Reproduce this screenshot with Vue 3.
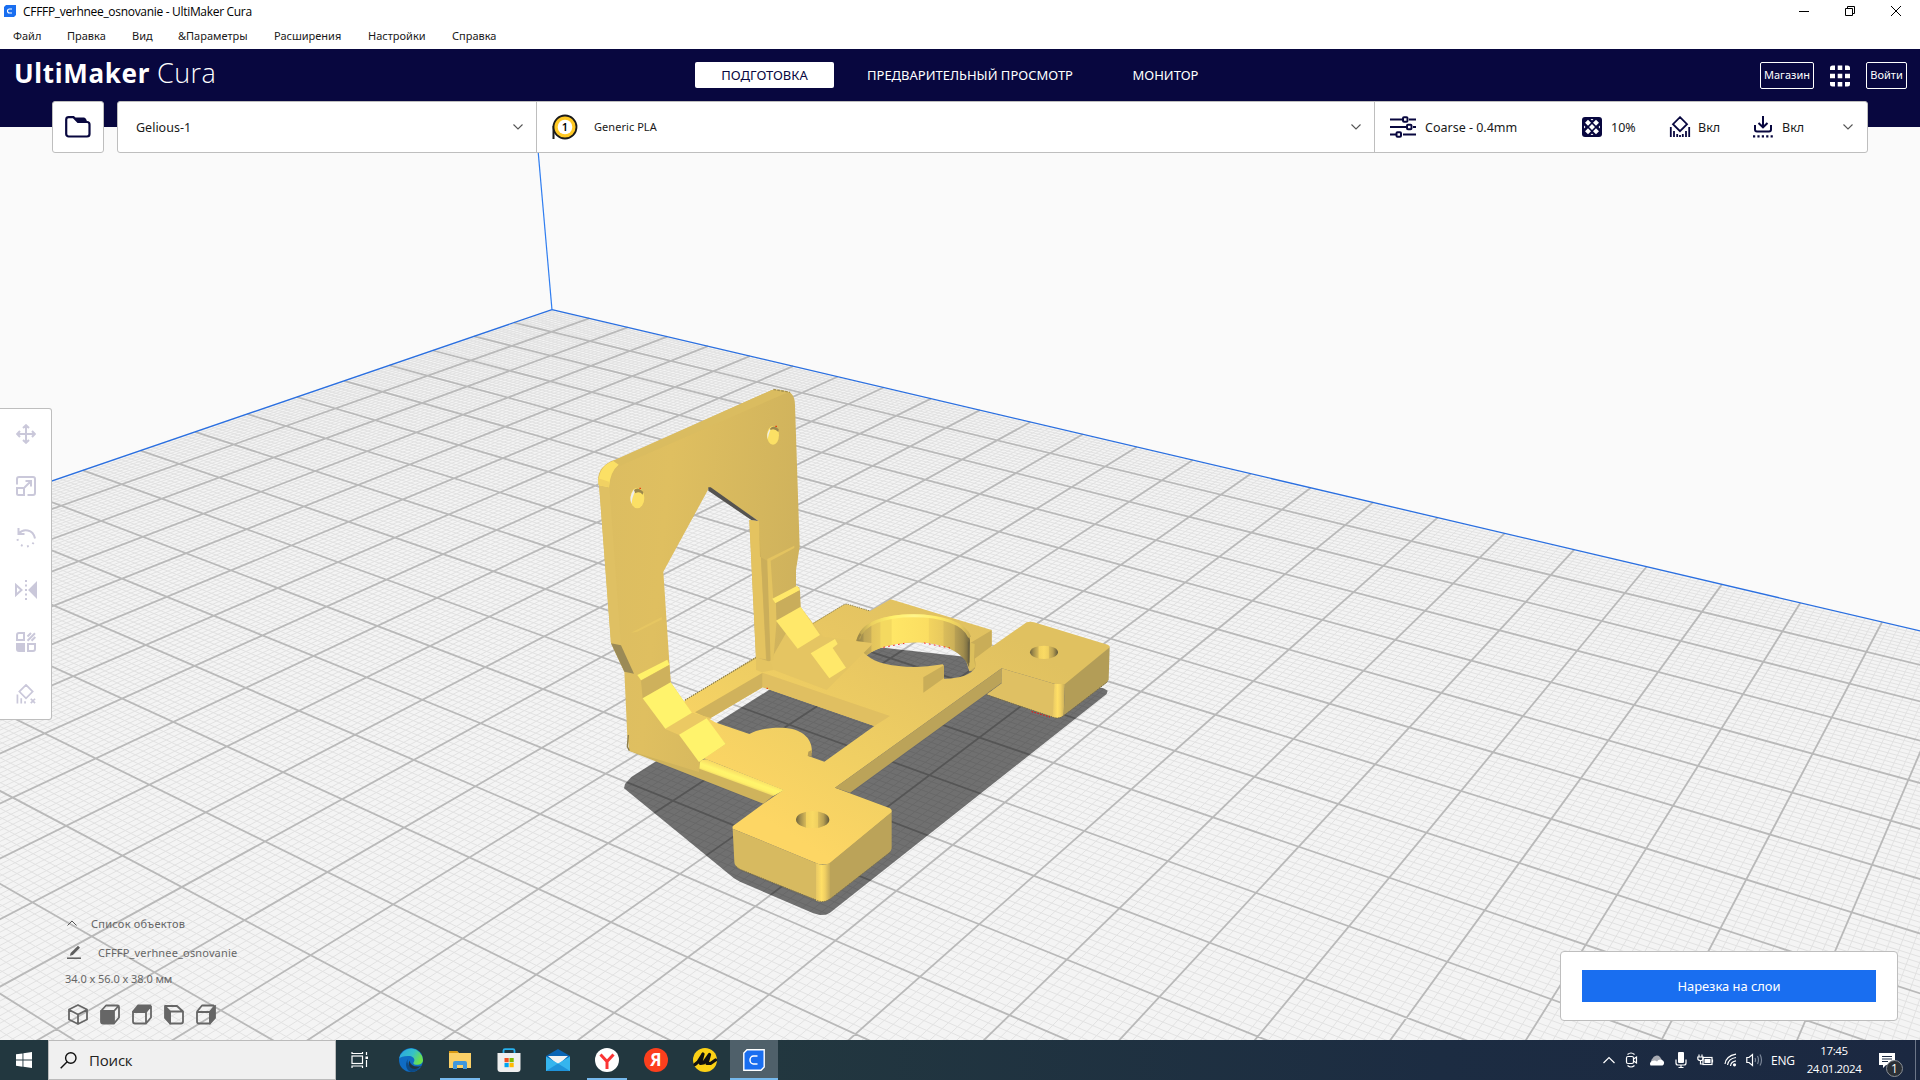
<script setup>
const menu = [
  { label: 'Файл', w: 54 },
  { label: 'Правка', w: 65 },
  { label: 'Вид', w: 46 },
  { label: '&Параметры', w: 96 },
  { label: 'Расширения', w: 94 },
  { label: 'Настройки', w: 84 },
  { label: 'Справка', w: 60 },
]

// Perspective projection of build plate coordinates (in centimetres) to the viewport
const project = (i, j) => {
  const d = 1 - 0.013994 * i - 0.020446 * j
  return [
    ((552 + 29.082 * i - 48.598 * j) / d).toFixed(1),
    ((309.6 + 4.312 * i + 6.455 * j) / d).toFixed(1),
  ]
}
const seg = (a, b) => `M${project(...a).join(' ')}L${project(...b).join(' ')}`
const MAX_I = 28
const MAX_J = 21
let minor = ''
let major = ''
for (let k = 1; k <= MAX_I * 10; k++) {
  const s = seg([k / 10, 0], [k / 10, MAX_J])
  if (k % 10) minor += s
  else major += s
}
for (let k = 1; k <= MAX_J * 10; k++) {
  const s = seg([0, k / 10], [MAX_I, k / 10])
  if (k % 10) minor += s
  else major += s
}
const plate = [[0, 0], [MAX_I, 0], [MAX_I, MAX_J], [0, MAX_J]].map((p) => project(...p).join(',')).join(' ')
const edges = seg([0, MAX_J], [0, 0]) + seg([0, 0], [MAX_I, 0])
</script>

<template>
  <div class="screen">
    <div class="titlebar">
      <svg class="app-icon" width="12" height="12" viewBox="0 0 12 12"><path d="M2 0H12V10L10 12H0V2Z" fill="#196ef0" /><path d="M8 4H5.5a2 2 0 0 0 0 4H8" fill="none" stroke="#fff" stroke-width="1.1" /></svg>
      <span class="title">CFFFP_verhnee_osnovanie - UltiMaker Cura</span>
      <div class="winbtns">
        <svg width="12" height="12" viewBox="0 0 12 12"><path d="M1 6.5H11" /></svg>
        <svg width="12" height="12" viewBox="0 0 12 12"><path d="M1.5 3.5H8.5V10.5H1.5ZM3.5 3.5V1.5H10.5V8.5H8.5" /></svg>
        <svg width="12" height="12" viewBox="0 0 12 12"><path d="M1 1L11 11M11 1L1 11" /></svg>
      </div>
    </div>
    <nav class="menubar">
      <span v-for="m in menu" :key="m.label" :style="{ width: m.w + 'px' }">{{ m.label }}</span>
    </nav>

    <header class="header">
      <div class="brand"><b>UltiMaker</b><span>Cura</span></div>
      <div class="tabs">
        <span class="tab active">ПОДГОТОВКА</span>
        <span class="tab preview">ПРЕДВАРИТЕЛЬНЫЙ ПРОСМОТР</span>
        <span class="tab monitor">МОНИТОР</span>
      </div>
      <div class="account">
        <span class="obtn shop">Магазин</span>
        <svg width="20" height="22" viewBox="0 0 20 22" fill="#fff">
          <path d="M0 5V3a2.500 2.500 0 0 1 2.500-2.500H5V5ZM7.700 .5h4.600V5H7.700ZM15 .5h2.500A2.500 2.500 0 0 1 20 3V5H15ZM0 8.700H5v4.600H0ZM7.700 8.700h4.600v4.600H7.700ZM15 8.700h5v4.600H15ZM0 17H5v4.500H2.500A2.500 2.500 0 0 1 0 19ZM7.700 17h4.600v4.500H7.700ZM15 17h5v2a2.500 2.500 0 0 1-2.500 2.500H15Z" />
        </svg>
        <span class="obtn login">Войти</span>
      </div>
    </header>

    <main class="stage">
      <svg class="scene" width="1920" height="913" viewBox="0 127 1920 913">
        <defs>
          <linearGradient id="top" gradientUnits="userSpaceOnUse" x1="700" y1="120" x2="250" y2="850"><stop offset="0" stop-color="#e0c160" /><stop offset=".3" stop-color="#e7c662" /><stop offset=".65" stop-color="#f0cf63" /><stop offset="1" stop-color="#fdd664" /></linearGradient>
          <linearGradient id="face" gradientUnits="userSpaceOnUse" x1="130" y1="500" x2="720" y2="560"><stop offset="0" stop-color="#dcbd61" /><stop offset=".3" stop-color="#dfbf60" /><stop offset="1" stop-color="#cfb25c" /></linearGradient>
          <linearGradient id="ring"><stop offset="0" stop-color="#8f7f48" /><stop offset=".05" stop-color="#a8934f" /><stop offset=".06" stop-color="#bfa656" /><stop offset=".12" stop-color="#c9ae58" /><stop offset=".13" stop-color="#e3c45c" /><stop offset=".2" stop-color="#e8ca5e" /><stop offset=".21" stop-color="#f4d960" /><stop offset=".3" stop-color="#f4d960" /><stop offset=".31" stop-color="#ffe666" /><stop offset=".63" stop-color="#fbde62" /><stop offset=".64" stop-color="#f2d35f" /><stop offset=".76" stop-color="#e8c95e" /><stop offset=".77" stop-color="#d9bc5b" /><stop offset=".86" stop-color="#ccb058" /><stop offset=".87" stop-color="#b8a054" /><stop offset=".94" stop-color="#a08c4d" /><stop offset="1" stop-color="#6f6540" /></linearGradient>
          <linearGradient id="rim" gradientUnits="userSpaceOnUse" x1="414" y1="0" x2="752" y2="0"><stop offset="0" stop-color="#b09a50" /><stop offset=".12" stop-color="#ecd05f" /><stop offset=".3" stop-color="#fff06a" /><stop offset=".5" stop-color="#fff58c" /><stop offset=".7" stop-color="#ffec67" /><stop offset=".9" stop-color="#e9cb5e" /><stop offset="1" stop-color="#c6ac56" /></linearGradient>
          <linearGradient id="bore"><stop offset="0" stop-color="#6f643e" /><stop offset=".12" stop-color="#a08c4c" /><stop offset=".3" stop-color="#d8ba59" /><stop offset=".31" stop-color="#f2d25f" /><stop offset=".5" stop-color="#fada64" /><stop offset=".66" stop-color="#efcf60" /><stop offset=".67" stop-color="#d9bb5a" /><stop offset=".82" stop-color="#b9a052" /><stop offset="1" stop-color="#5f573b" /></linearGradient>
          <linearGradient id="corner"><stop offset="0" stop-color="#e8c864" /><stop offset=".4" stop-color="#ffdf66" /><stop offset=".65" stop-color="#f0cf62" /><stop offset="1" stop-color="#c4aa5a" /></linearGradient>
          <linearGradient id="fillet" gradientUnits="userSpaceOnUse" x1="80" y1="643" x2="66" y2="682"><stop offset="0" stop-color="#f8da64" /><stop offset=".4" stop-color="#fff56c" /><stop offset=".65" stop-color="#fff069" /><stop offset="1" stop-color="#dfc05f" /></linearGradient>
        </defs>

        <rect y="127" width="1920" height="913" fill="#fafafa" />
        <polygon :points="plate" fill="#f4f4f4" />
        <path :d="minor" stroke="#e2e2e2" stroke-width="1" />
        <path :d="major" stroke="#b9b9b9" stroke-width="1.8" />
        <path :d="edges" stroke="#2a6fe0" stroke-width="1.300" fill="none" />
        <path d="M536 127L552 310" stroke="#2f7df0" stroke-width="1.200" />

        <g transform="translate(720 560) scale(.33333)">
          <polygon points="-288,685 -285,672 -265,650 150,388 340,262 490,263 735,290 1150,385 1163,392 1160,402 330,1058 318,1064 300,1065 280,1060 60,965 42,955" fill="#000" fill-opacity=".54" />

          <!-- base plate with the window and the round opening cut out -->
          <path fill="url(#top)" fill-rule="evenodd" d="M-105 421L110 290L370 135Q380 130 390 135L450 153L512 118L815 210L815 260L920 187Q930 184 942 187L1163 254Q1172 258 1168 264L1040 372L1005 372L845 325L345 683L510 745Q518 750 514 758L328 912L295 912L38 806Q36 798 42 796L130 731L190 690L-60 590L-150 500Z
            M128 382L463 498L313 605L265 588L275 578C280 540 250 503 180 503C140 503 110 510 88 522L-15 487L-32 476Z
            M440 286C470 262 530 247 600 247C660 250 710 270 735 292L748 334L766 322C755 345 715 357 672 356L672 318L668 313C580 328 480 322 440 286Z" />
          <path d="M128 338V382L-32 476L-75 457Z" fill="#d0b25c" />
          <path d="M128 338L510 468L463 498L128 382Z" fill="#e0bf61" />
          <path d="M265 575L275 570V590L263 588Z" fill="#b59c55" />
          <path d="M-105 421L110 290M280 190L370 135Q380 130 390 135L450 153" fill="none" stroke="#8f7f48" stroke-width="3" stroke-dasharray="4 3" />

          <!-- round opening -->
          <path d="M412 245C415 190 490 163 580 163C670 163 745 195 750 240L748 325C735 280 670 246 590 247C520 248 470 264 440 286Q410 265 412 245Z" fill="url(#ring)" />
          <path d="M416 238C425 190 495 167 580 167C665 167 735 190 749 232" fill="none" stroke="url(#rim)" stroke-width="9" />
          <path d="M412 262Q408 238 422 222" fill="none" stroke="#9d8949" stroke-width="6" />
          <path d="M752 248L815 211V258L764 296Q772 322 758 332L748 334Z" fill="#c9ad58" />
          <path d="M752 248L764 252L762 296L766 320L748 334Z" fill="#dcbf5c" />
          <path d="M746 245V308" stroke="#6b6240" stroke-width="5" />
          <path d="M610 352L672 316V354L610 398Z" fill="#c9ad58" />
          <path d="M490 262L553 250M612 249L690 264" stroke="#f00" stroke-width="2.500" stroke-dasharray="5 10" />

          <!-- beam and right block -->
          <path d="M345 683L845 325V368L390 698Z" fill="#bba359" />
          <path d="M845 325L1005 372L1000 472L800 403L845 370Z" fill="#dfc063" />
          <path d="M1003 372H1035L1031 466Q1015 480 998 470Z" fill="url(#corner)" />
          <path d="M1035 372L1169 262L1166 358L1160 368L1031 466Z" fill="#b39d57" />
          <path d="M800 405L1000 472Q1015 478 1031 468L1164 364" fill="none" stroke="#756a45" stroke-width="3" stroke-dasharray="4 3" />
          <path d="M935 455L990 471" stroke="#f00" stroke-width="3" stroke-dasharray="4 5" />
          <ellipse cx="972" cy="277" rx="42" ry="20" fill="url(#bore)" />

          <!-- front block -->
          <path d="M38 806L295 912L290 1020L60 928Q43 918 43 905Z" fill="#d7ba60" />
          <path d="M288 910Q310 918 330 908V1016Q312 1030 288 1022Z" fill="url(#corner)" />
          <path d="M330 908L515 756V865Q514 875 505 880L330 1017Z" fill="#bba359" />
          <path d="M47 918L60 928L290 1021Q312 1030 330 1017L512 876" fill="none" stroke="#7d7147" stroke-width="3" stroke-dasharray="4 3" />
          <ellipse cx="278" cy="779" rx="50" ry="26" fill="url(#bore)" />

          <!-- long front edge -->
          <path d="M-272 570L-60 600L190 690L160 707L130 731L-272 573Z" fill="#cfb35c" />
        </g>

        <g transform="translate(560 370) scale(.33333)">
          <!-- upright bracket -->
          <path fill="url(#face)" d="M115 320Q120 285 165 270L636 60Q650 55 690 67Q705 80 705 105L719 530L708 600V650L718 652L721 712L779 795L713 835L840 860L632 878L588 864L568 450L595 453L447 354L310 605L332 937L395 1028L430 1040L497 1122L417 1175V1206L208 1142L202 1100L193 905L153 820Z" />
          <path d="M632 870L722 712L790 800L940 820L800 960L588 880Z" fill="#e5c562" />
          <path d="M115 320L118 350L153 820L183 826L148 348Z" fill="#dfc063" />
          <path d="M165 270L636 60L690 67L672 72L180 287Q155 300 148 348L116 345Q112 285 165 270Z" fill="#dabc60" />
          <path d="M116 345Q112 290 160 273L176 284Q150 305 147 352L117 346Z" fill="#fbe065" />
          <path d="M115 325L117 346L147 352V335Z" fill="#f1d163" />
          <path d="M640 58L690 67" stroke="#a59150" stroke-width="4" stroke-dasharray="8 4" />
          <path d="M153 820L183 826L222 911L193 905Z" fill="#9b8a56" />
          <path d="M445 352L452 352L595 453L575 451L445 362Z" fill="#555350" />
          <path d="M568 450L597 454L618 868L588 864Z" fill="#e4c360" />
          <path d="M597 454L600 560L622 573L632 872L620 876Z" fill="#cbae5a" />
          <path d="M588 862L632 876L640 900L606 907L588 900Z" fill="#e4c461" />

          <path d="M622 573V567L703 527V534L632 572L640 690L648 702L650 752L640 870L632 872Z" fill="#e3c360" />
          <path d="M637 686L712 647L720 660L646 700Z" fill="#ffe869" />
          <path d="M648 700L720 661L722 711L650 750Z" fill="#c9ad5b" />
          <path d="M648 752L722 710L780 795L713 836Z" fill="#ffe86a" />
          <path d="M752 850L825 807L833 822L818 834L858 893L808 925Z" fill="#ffe86a" />

          <path d="M213 788L305 741L307 748L232 785Z" fill="#e6c662" />
          <path d="M232 915L322 869L328 884L243 931Z" fill="#fff269" />
          <path d="M243 932L328 885L332 937L248 985Z" fill="#ceb15c" />
          <path d="M314 1076L395 1028L455 1045L357 1095Z" fill="#ebc963" />
          <path d="M248 985L332 937L396 1028L316 1076Z" fill="#fff36c" />
          <path d="M357 1094L440 1045L497 1122L417 1176Z" fill="#fff36c" />
          <path d="M205 1095L202 1130L208 1142" fill="none" stroke="#8e7e4a" stroke-width="4" />
          <path d="M375 990L588 864" stroke="#8f7f48" stroke-width="3" stroke-dasharray="4 3" />

          <ellipse cx="232" cy="384" rx="21" ry="31" fill="#fbe065" />
          <path d="M222 358Q206 380 214 402Q216 384 226 360Z" fill="#eee" />
          <path d="M222 360Q234 348 250 366L248 374Q238 362 226 370Z" fill="#9c884c" />
          <path d="M238 355H243" stroke="#e20" stroke-width="3" />
          <ellipse cx="639" cy="196" rx="18" ry="28" fill="#fbe065" />
          <path d="M629 178Q619 190 623 208Q626 190 632 178Z" fill="#eee" />
          <path d="M630 176Q642 162 656 178L655 186Q643 174 632 180Z" fill="#9c884c" />
          <path d="M646 169H651M620 955H624" stroke="#e20" stroke-width="3" />
        </g>

        <path transform="translate(720 560) scale(.33333)" d="M-62 626L-60 606Q-55 596 -40 598L192 690L160 708Z" fill="url(#fillet)" />
      </svg>

      <div class="config">
        <div class="card open">
          <svg width="26" height="22" viewBox="0 0 26 22"><path d="M1.200 3.500A2.500 2.500 0 0 1 3.700 1.200H8.500L13 6H22A2.500 2.500 0 0 1 24.500 8.500V18A2.500 2.500 0 0 1 22 20.500H3.700A2.500 2.500 0 0 1 1.200 18Z" fill="none" stroke="#08073f" stroke-width="2.200" /><path d="M10 1.500H19Q21.500 2 22 6H13.500Z" fill="#08073f" /></svg>
        </div>
        <div class="card bar">
          <div class="cell machine">
            <span>Gelious-1</span>
            <svg class="chev" width="10" height="6" viewBox="0 0 10 6"><path d="M.5 .5L5 5L9.500 .5" /></svg>
          </div>
          <div class="cell material">
            <svg width="28" height="28" viewBox="0 0 28 28"><path d="M2.500 13V26" stroke="#1b1b1b" stroke-width="2" /><circle cx="14" cy="14" r="11.500" fill="#ffc924" stroke="#1b1b1b" stroke-width="1.800" /><circle cx="14" cy="14" r="7.300" fill="#fff" /><text x="14" y="18" text-anchor="middle" font-size="11" font-weight="600">1</text></svg>
            <span class="pla">Generic PLA</span>
            <svg class="chev" width="10" height="6" viewBox="0 0 10 6"><path d="M.5 .5L5 5L9.500 .5" /></svg>
          </div>
          <div class="cell print">
            <svg width="26" height="22" viewBox="0 0 26 22" fill="none" stroke="#08073f" stroke-width="2"><path d="M0 3.500H12M19 3.500H26M0 11H16M23 11H26M0 18.500H6M13 18.500H26" /><rect x="13" y="1.300" width="4.500" height="4.500" rx="1" /><rect x="17" y="8.700" width="4.500" height="4.500" rx="1" /><rect x="6.500" y="16.200" width="4.500" height="4.500" rx="1" /></svg>
            <span class="profile">Coarse - 0.4mm</span>
            <svg class="infill" width="20" height="20" viewBox="0 0 20 20"><rect width="20" height="20" rx="3" fill="#08073f" /><path d="M6 2.800L9 5.800L6 8.800L3 5.800ZM14 2.800L17 5.800L14 8.800L11 5.800ZM6 11.200L9 14.200L6 17.200L3 14.200ZM14 11.200L17 14.200L14 17.200L11 14.200ZM10 7L13 10L10 13L7 10ZM2 8.500L3.500 10L2 11.500ZM18 8.500L16.500 10L18 11.500ZM8.500 2H11.500L10 3.500ZM8.500 18H11.500L10 16.500Z" fill="#fff" /></svg>
            <span class="pct">10%</span>
            <svg class="supp" width="22" height="22" viewBox="0 0 22 22" fill="none" stroke="#08073f" stroke-width="1.800"><path d="M11 1.200L18 8.200L11 15.200L4 8.200ZM1.800 11V21M5 15V21M8.200 18V21M11 19V21M13.800 18V21M17 15V21M20.200 11V21" /></svg>
            <span class="on1">Вкл</span>
            <svg class="adh" width="20" height="22" viewBox="0 0 20 22" fill="none" stroke="#08073f"><path d="M10 0V10M5.500 7L10 11.300L14.500 7" stroke-width="2" /><path d="M2 9V13.500Q2 15.500 4 15.500H16Q18 15.500 18 13.500V9" stroke-width="2" /><path d="M0 20.300H20" stroke-width="2.200" stroke-dasharray="2.200 2.200" /></svg>
            <span class="on2">Вкл</span>
            <svg class="chev" width="10" height="6" viewBox="0 0 10 6"><path d="M.5 .5L5 5L9.500 .5" /></svg>
          </div>
        </div>
      </div>

      <div class="tools">
        <svg viewBox="0 0 20 20"><path d="M10 1.500V18.500M1.500 10H18.500M7 4L10 1.200L13 4M7 16L10 18.800L13 16M4 7L1.200 10L4 13M16 7L18.800 10L16 13" /></svg>
        <svg viewBox="0 0 20 20"><path d="M1 8.500V3A2 2 0 0 1 3 1H17A2 2 0 0 1 19 3V17A2 2 0 0 1 17 19H11.500M1 12H8V19H2.500A1.500 1.500 0 0 1 1 17.500ZM8.500 11.500L14.500 5.500M9.500 5H15V10.500" /></svg>
        <svg viewBox="0 0 20 20"><path d="M2.500 0V6H8.500M3 5.500C7 .5 17 1 19 10.500" /><path d="M1.500 11L2 13.500M5 17L7.500 18.300M11 18.500L14 17.800M16.500 16L18.500 13.500" stroke-dasharray="1.800 2" /></svg>
        <svg viewBox="0 0 22 20" class="wide"><path d="M1 5L6.500 10L1 15Z" /><path d="M21 3.500V16.500L14.500 10Z" fill="#cac8da" /><path d="M11 0V20" stroke-dasharray="2 2.500" /></svg>
        <svg viewBox="0 0 20 20"><path d="M1 3A2 2 0 0 1 3 1H8V8H1ZM12 12H19V17A2 2 0 0 1 17 19H12Z" /><path d="M1 12H8V19H3A2 2 0 0 1 1 17Z" fill="#cac8da" /><path d="M11.500 4.500L15 1M11.500 8.700L19 1.200M15.500 8.700L19.300 5" /></svg>
        <svg viewBox="0 0 20 21"><path d="M10 1L17 8L10 15L3 8ZM1 11V20.500M5 15V20.500M9 18V20.500M15 15.500L19.500 20M19.500 15.500L15 20" stroke-width="1.800" /></svg>
      </div>

      <div class="bottom">
        <div class="objects">
          <div class="orow">
            <svg width="10" height="6" viewBox="0 0 10 6"><path d="M.5 5.500L5 1L9.500 5.500" fill="none" stroke="#555" stroke-width="1" /></svg>
            <span class="olist">Список объектов</span>
          </div>
          <div class="orow second">
            <svg width="14" height="14" viewBox="0 0 14 14"><path d="M0 13.200H14" stroke="#5e5e5e" stroke-width="1.500" /><path d="M3 10.800L3.600 8L11 .8L13 2.700L5.800 10Z" fill="#5e5e5e" /></svg>
            <span class="ofile">CFFFP_verhnee_osnovanie</span>
          </div>
          <div class="dims">34.0 x 56.0 x 38.0 мм</div>
          <div class="views">
            <svg viewBox="0 0 20 21"><path d="M10 1L19 5.500V15.500L10 20L1 15.500V5.500ZM1.500 6L10 10.500L18.500 6M10 10.500V20" /></svg>
            <svg viewBox="0 0 20 21"><path d="M1 7L6 1.500H17.500Q19 1.500 19 3V13.500L14 19.500M14 7L18.500 2" /><path d="M1 7H14V19.500H3Q1 19.500 1 17.500Z" fill="#666" /></svg>
            <svg viewBox="0 0 20 21"><path d="M1 8H14V19.500H3Q1 19.500 1 17.500ZM19 2V13.500L14 19.500M14 8L19 2" /><path d="M1 7.500L6 1.500H18.500L14 7.500Z" fill="#666" /></svg>
            <svg viewBox="0 0 20 21"><path d="M6 7.500H19V17.500Q19 19.500 17 19.500H6ZM1 2H13L19 7.500" /><path d="M1 2L6 7.500V19.500L1 14Z" fill="#666" /></svg>
            <svg viewBox="0 0 20 21"><path d="M1 8H14V19.500H3Q1 19.500 1 17.500ZM1 7.500L6 1.500H18" /><path d="M14 7.500L19 1.800V14L14 19.500Z" fill="#666" /></svg>
          </div>
        </div>
        <div class="slice"><div class="slice-btn">Нарезка на слои</div></div>
      </div>
    </main>

    <footer class="taskbar">
      <div class="start"><svg width="16" height="16" viewBox="0 0 16 16" fill="#fff"><path d="M0 2.300L6.500 1.400V7.600H0ZM7.400 1.200L16 0V7.600H7.400ZM0 8.500H6.500V14.700L0 13.700ZM7.400 8.500H16V16L7.400 14.800Z" /></svg></div>
      <div class="search">
        <svg width="17" height="17" viewBox="0 0 17 17" fill="none" stroke="#111" stroke-width="1.400"><circle cx="10.800" cy="6" r="5.200" /><path d="M7.200 9.800L.7 16.300" /></svg>
        <span>Поиск</span>
      </div>
      <div class="apps">
        <div class="app tv"><svg width="18" height="18" viewBox="0 0 18 18" fill="none" stroke="#fff" stroke-width="1.200"><rect x="1" y="5" width="10.500" height="7.500" /><path d="M1 1V2.500H11.500V1M1 17V15H11.500V17M15.500 1V4M15.500 9V16" /><rect x="14.500" y="5.500" width="2.500" height="2.500" fill="#fff" stroke="none" /></svg></div>
        <div class="app">
          <svg width="24" height="24" viewBox="0 0 24 24"><defs><linearGradient id="eg" x1="0" y1="0" x2="1" y2=".4"><stop offset="0" stop-color="#2aa4e4" /><stop offset=".6" stop-color="#35c1c8" /><stop offset="1" stop-color="#6be04e" /></linearGradient></defs><circle cx="12" cy="12" r="12" fill="#0f6cc4" /><path d="M.2 10.500A12 12 0 0 1 24 12C24 16.500 19 17.500 15.500 16.500Q13.500 15.700 15 13.800C16.500 10.500 13.500 8 10 8C5 7.800 1.500 9 .2 10.500Z" fill="url(#eg)" /><path d="M8.500 13C8.500 18 13 21.500 20.500 20.200Q17 24 12 24C6 22 5.500 13.500 10.500 9.500Q8.500 11 8.500 13Z" fill="#0c4a86" /><path d="M10.500 12.500Q11.500 19 20 18.500Q22 18 22.500 17.500Q19 22 13 20.500Q8 17.500 10.500 12.500Z" fill="#22343f" /></svg>
        </div>
        <div class="app run"><svg width="22" height="20" viewBox="0 0 22 20"><path d="M0 1H8L10 3H22V18H0Z" fill="#fbd067" /><path d="M0 1H8L9.500 3H0Z" fill="#d99a14" /><path d="M4 19V13Q4 11 6 11H16Q18 11 18 13V19H14V15H8V19Z" fill="#3f97dc" /></svg></div>
        <div class="app"><svg width="24" height="24" viewBox="0 0 24 24"><path d="M6.500 6V2.500Q6.500 1.200 8 1.200H16Q17.500 1.200 17.500 2.500V6" fill="none" stroke="#27b1ee" stroke-width="1.800" /><path d="M.5 5H23.500V21Q23.500 24 20.500 24H3.500Q.5 24 .5 21Z" fill="#efefef" /><rect x="7.500" y="10" width="4.200" height="4.200" fill="#f25022" /><rect x="12.500" y="10" width="4.200" height="4.200" fill="#7fba00" /><rect x="7.500" y="15" width="4.200" height="4.200" fill="#00a4ef" /><rect x="12.500" y="15" width="4.200" height="4.200" fill="#ffb900" /></svg></div>
        <div class="app"><svg width="24" height="22" viewBox="0 0 24 22"><path d="M0 7L12 0L24 7V14H0Z" fill="#0a64b4" /><path d="M2 7H22L12 16Z" fill="#f2f2f2" /><path d="M0 7.500L12 14.500L24 7.500V22H0Z" fill="#35b5ee" /><path d="M0 22L12 14.500L24 22Z" fill="#1f93da" /></svg></div>
        <div class="app run"><svg width="24" height="24" viewBox="0 0 24 24"><circle cx="12" cy="12" r="12" fill="#fff" /><path d="M5.500 6.500L12 13.500L18.500 6.500M12 13V21" stroke="#fb3434" stroke-width="3" fill="none" /></svg></div>
        <div class="app"><span class="ya">Я</span></div>
        <div class="app"><svg width="24" height="24" viewBox="0 0 24 24"><circle cx="12" cy="12" r="12" fill="#fcd116" /><path d="M2 16.500L5 14L10 6L7.500 15.500L10.500 15L16.500 6.500L14 15.500L17.500 15.500L22.500 12" stroke="#111" stroke-width="3.200" stroke-linejoin="round" stroke-linecap="round" fill="none" /></svg></div>
        <div class="app run cura"><svg width="22" height="22" viewBox="0 0 22 22"><path d="M4 .8H21.200V18L18 21.200H.8V4Z" fill="#196ef0" stroke="#fff" stroke-width="1.400" /><path d="M14.500 7H10.500A3.500 4 0 0 0 10.500 15H14.500" fill="none" stroke="#fff" stroke-width="1.500" /></svg></div>
      </div>
      <div class="tray">
        <svg width="12" height="8" viewBox="0 0 12 8"><path d="M.5 7L6 1.500L11.500 7" /></svg>
        <svg width="14" height="16" viewBox="0 0 14 16"><rect x="1.500" y="4.500" width="7" height="7" rx="1.500" /><path d="M8.500 7L11.500 5V11L8.500 9M2.500 2.500Q6 -.5 9.500 2.500M2.500 13.500Q6 16.500 9.500 13.500" /></svg>
        <svg width="16" height="11" viewBox="0 0 16 11"><path d="M3.500 9A3.500 3.500 0 0 1 3.500 3.500A4.500 4.500 0 0 1 11 2L13 5Z" fill="#a9acb4" stroke="none" /><path d="M1.500 10.500A3 3 0 0 1 3 6Q6 5 8 6.500Q10 3.500 13 5A3 3 0 0 1 13.500 10.500Z" fill="#fff" stroke="none" /></svg>
        <svg width="12" height="16" viewBox="0 0 12 16"><rect x="3" y="0" width="6" height="11" rx="1" fill="#fff" stroke="none" /><path d="M1 7.500V11Q1 13 3 13H9Q11 13 11 11V7.500M6 13V15.500M3.500 15.500H8.500" /></svg>
        <svg width="17" height="12" viewBox="0 0 17 12"><rect x="6" y="3.500" width="9" height="7" /><rect x="7.500" y="5" width="6" height="4" fill="#fff" stroke="none" /><path d="M15.500 5.500V8.500M2 .5V3M5 .5V3M.8 3H6V5Q6 6.500 3.500 6.500Q.8 6.500 .8 4.500ZM3.500 6.500V10H6" /></svg>
        <svg class="wifi" width="14" height="14" viewBox="0 0 14 14"><path d="M1 11Q2 3 12 1.200M3.500 12Q4.500 5.500 12 4.500M6.500 13Q7 8.500 12 7.800" /><circle cx="10.500" cy="11.800" r="1.600" fill="#fff" stroke="none" /></svg>
        <svg class="sound" width="17" height="14" viewBox="0 0 17 14"><path d="M.8 4.500H3L6.500 1.500V12.500L3 9.500H.8Z" /><path d="M9 5Q10 7 9 9M11.500 3Q13.500 7 11.500 11M14 1.500Q17 7 14 12.500" stroke="#7c8798" /></svg>
        <span class="eng">ENG</span>
        <div class="clock"><span>17:45</span><span>24.01.2024</span></div>
        <div class="notif">
          <svg width="16" height="15" viewBox="0 0 16 15"><path d="M0 0H16V12H7L4 15V12H0Z" fill="#fff" stroke="none" /><path d="M3 3.500H13M3 6H13M3 8.500H9" stroke="#1b2a43" stroke-width="1" /></svg>
          <span class="badge">1</span>
        </div>
        <div class="peek"></div>
      </div>
    </footer>
  </div>
</template>

<style>
body { margin: 0; overflow: hidden; }
</style>

<style scoped>
.screen { width: 1920px; height: 1080px; display: flex; flex-direction: column; overflow: hidden; background: #fff; font-family: "Noto Sans", sans-serif; color: #191919; white-space: nowrap; }
svg { display: block; flex: none; }
.titlebar { height: 24px; display: flex; align-items: center; box-sizing: border-box; padding: 0 18px 2px 4px; font-size: 12px; color: #000; font-family: "Open Sans", sans-serif; }
.title { margin-left: 7px; letter-spacing: -.31px; }
.winbtns { margin-left: auto; display: flex; gap: 34px; }
.winbtns path { fill: none; stroke: #000; stroke-width: 1; }
.menubar { height: 25px; display: flex; align-items: center; padding-left: 13px; padding-bottom: 2px; box-sizing: border-box; font-size: 11px; }

.header { height: 78px; background: #08073f; display: flex; align-items: flex-start; color: #fff; flex: none; }
.brand { margin: 5px 0 0 14px; width: 681px; display: flex; line-height: 38px; }
.brand b { font-weight: 700; font-size: 26px; width: 143px; letter-spacing: .7px; }
.brand span { font-family: "Open Sans", sans-serif; font-size: 27px; font-weight: 300; letter-spacing: .4px; }
.tabs { display: flex; margin-top: 13px; height: 26px; font-size: 13px; line-height: 26px; }
.tab.active { width: 139px; text-align: center; color: #08073f; background: #fff; border-radius: 2px; }
.tab.preview { margin-left: 33px; width: 206px; }
.tab.monitor { margin-left: 59.500px; }
.account { margin: 13px 13px 0 auto; display: flex; align-items: center; font-size: 11px; }
.obtn { box-sizing: border-box; height: 27px; border: 1px solid #fff; border-radius: 2px; line-height: 24px; text-align: center; }
.shop { width: 54px; margin-right: 16px; }
.login { width: 41px; margin-left: 16px; }

.stage { flex: 1; position: relative; display: flex; flex-direction: column; min-height: 0; }
.scene { position: absolute; left: 0; top: 0; }
.config { position: relative; display: flex; margin: -26px 0 0 52px; height: 52px; flex: none; }
.card { box-sizing: border-box; background: #fff; border: 1px solid #bebebe; border-radius: 3px; }
.open { width: 52px; display: flex; align-items: center; justify-content: center; }
.bar { margin-left: 13px; width: 1751px; display: flex; font-size: 12.500px; }
.cell { display: flex; align-items: center; box-sizing: border-box; }
.chev path { fill: none; stroke: #555; stroke-width: 1.100; }
.cell .chev { margin-left: auto; }
.machine { width: 419px; padding: 0 13px 0 18px; border-right: 1px solid #bebebe; }
.material { width: 838px; padding: 0 13px 0 14px; border-right: 1px solid #bebebe; }
.pla { margin-left: 15px; padding-bottom: 1px; font-size: 11px; letter-spacing: .05px; }
.print { flex: 1; padding: 0 14px 0 15px; }
.profile { margin-left: 9px; width: 157px; }
.pct { margin-left: 9px; width: 58px; }
.on1 { margin-left: 7px; width: 55px; }
.on2 { margin-left: 9px; }

.tools { position: relative; box-sizing: border-box; margin-top: 255px; width: 52px; height: 312px; background: #fff; border: 1px solid #bebebe; border-left: 0; border-radius: 0 3px 3px 0; display: flex; flex-direction: column; align-items: center; gap: 32px; padding-top: 15px; flex: none; }
.tools svg { width: 20px; height: 20px; fill: none; stroke: #cac8da; stroke-width: 2; }
.tools svg.wide { width: 22px; }

.bottom { position: relative; margin-top: auto; display: flex; justify-content: space-between; align-items: flex-end; padding: 0 22px 15px 65px; color: #666; font-size: 11px; }
.orow { display: flex; align-items: center; height: 20px; padding-left: 2px; }
.olist { margin-left: 14px; letter-spacing: .25px; }
.ofile { margin-left: 17px; letter-spacing: .16px; }
.second { margin-top: 9px; }
.dims { margin-top: 7px; height: 20px; line-height: 20px; letter-spacing: -.05px; }
.views { display: flex; gap: 12px; margin: 15px 0 0 3px; }
.views svg { width: 20px; height: 21px; fill: none; stroke: #666; stroke-width: 1.800; stroke-linejoin: round; }
.slice { box-sizing: border-box; width: 338px; height: 70px; margin-bottom: 4px; background: #fff; border: 1px solid #bebebe; border-radius: 4px; padding: 18px 21px; }
.slice-btn { height: 32px; background: #196ef0; color: #fff; text-align: center; line-height: 32px; font-size: 12.900px; }

.taskbar { height: 40px; flex: none; display: flex; background: linear-gradient(90deg, #22373f 0%, #22373f 40%, #1c2c42 75%, #1b2841 100%); color: #fff; }
.start { width: 48px; display: flex; align-items: center; justify-content: center; }
.search { box-sizing: border-box; width: 288px; background: #f0f0f0; border: 1px solid #bbb; display: flex; align-items: center; padding-left: 11px; font-size: 15px; color: #222; font-family: "Open Sans", sans-serif; letter-spacing: -.2px; }
.search span { margin-left: 12px; }
.apps { display: flex; }
.app { width: 48px; margin-right: 1px; display: flex; align-items: center; justify-content: center; position: relative; }
.app.tv { width: 48px; margin-right: 3px; }
.run::after { content: ""; position: absolute; left: 4px; right: 4px; bottom: 0; height: 2px; background: #76b9ed; }
.cura { background: #4f606a; }
.cura::after { left: 0; right: 0; }
.ya { width: 24px; height: 24px; border-radius: 50%; background: #fc3f1d; text-align: center; font: 700 17px/23px "Open Sans", sans-serif; }
.tray { margin-left: auto; display: flex; align-items: center; font-size: 12px; font-family: "Open Sans", sans-serif; }
.tray svg { fill: none; stroke: #fff; stroke-width: 1.200; margin-right: 10px; }
.tray svg.wifi { margin-right: 7.500px; }
.tray svg.sound { margin-right: 8.500px; }
.eng { width: 30px; letter-spacing: -.2px; }
.clock { width: 66px; display: flex; flex-direction: column; align-items: center; line-height: 18px; font-size: 11.500px; letter-spacing: -.4px; }
.notif { position: relative; margin-left: 12px; width: 36px; }
.tray .notif svg { margin: 0; }
.badge { position: absolute; left: 7px; top: 7px; width: 15px; height: 15px; border: 1px solid #8a8f96; border-radius: 50%; background: #2b3036; font-size: 12px; line-height: 15px; text-align: center; }
.peek { width: 4px; height: 40px; border-left: 1px solid #6c7688; }
</style>
